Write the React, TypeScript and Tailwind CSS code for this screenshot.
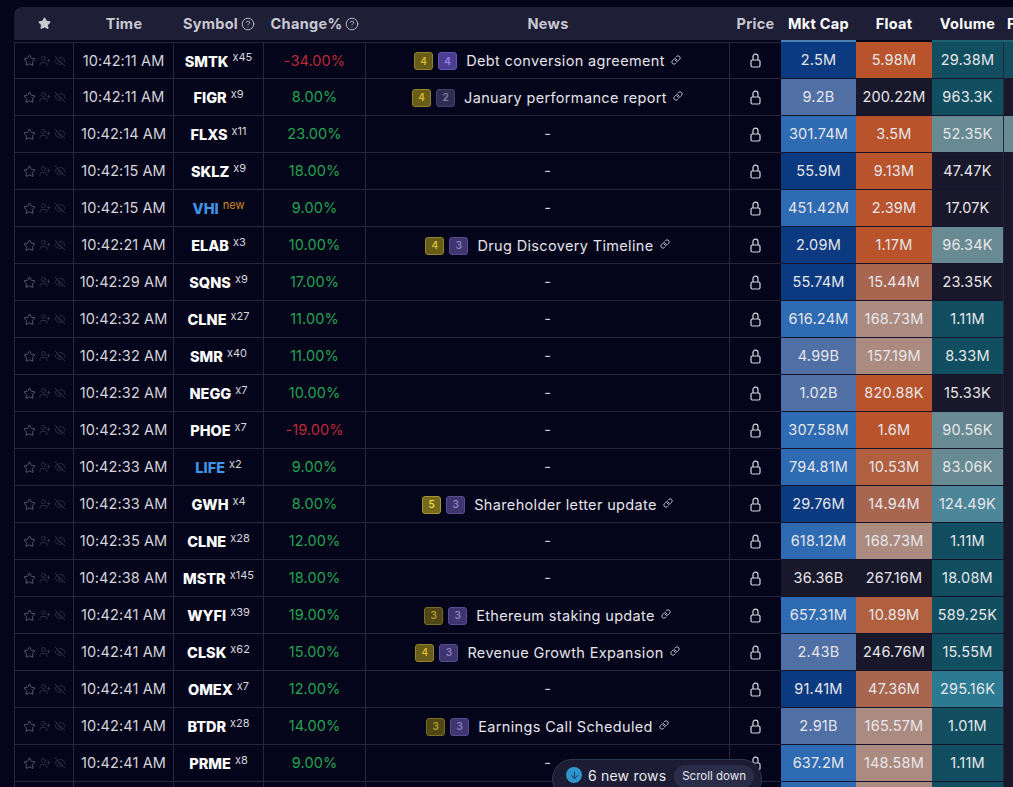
import React from 'react';
import { Star, UserPlus, EyeOff, Link, CircleHelp, ArrowDown } from 'lucide-react';

const navy = 'bg-[#0b3a80]';
const slate = 'bg-[#4f6fa5]';
const blue = 'bg-[#2f6bb3]';
const dark = 'bg-[#18182a]';
const orange = 'bg-[#b9532c]';
const rust = 'bg-[#b0603f]';
const clay = 'bg-[#a8654f]';
const tan = 'bg-[#ab8a80]';
const teal = 'bg-[#114f60]';
const grey = 'bg-[#688a92]';
const steel = 'bg-[#4d8599]';
const cyan = 'bg-[#2c7a92]';

type Row = {
  time: string; sym: string; x: string; chg: string; up: boolean;
  news?: string; b?: [string, string];
  cap: string; capC: string; flt: string; fltC: string; vol: string; volC: string;
  lastC?: string; symC?: string;
};

const rows: Row[] = [
  { time: '10:42:11 AM', sym: 'SMTK', x: 'x45', chg: '-34.00%', up: false, news: 'Debt conversion agreement', b: ['4', '4'], cap: '2.5M', capC: navy, flt: '5.98M', fltC: orange, vol: '29.38M', volC: teal, lastC: teal },
  { time: '10:42:11 AM', sym: 'FIGR', x: 'x9', chg: '8.00%', up: true, news: 'January performance report', b: ['4', '2'], cap: '9.2B', capC: slate, flt: '200.22M', fltC: dark, vol: '963.3K', volC: teal },
  { time: '10:42:14 AM', sym: 'FLXS', x: 'x11', chg: '23.00%', up: true, cap: '301.74M', capC: blue, flt: '3.5M', fltC: orange, vol: '52.35K', volC: grey, lastC: grey },
  { time: '10:42:15 AM', sym: 'SKLZ', x: 'x9', chg: '18.00%', up: true, cap: '55.9M', capC: navy, flt: '9.13M', fltC: orange, vol: '47.47K', volC: dark },
  { time: '10:42:15 AM', sym: 'VHI', x: 'new', chg: '9.00%', up: true, cap: '451.42M', capC: blue, flt: '2.39M', fltC: orange, vol: '17.07K', volC: dark, symC: 'text-[#3f95e6]' },
  { time: '10:42:21 AM', sym: 'ELAB', x: 'x3', chg: '10.00%', up: true, news: 'Drug Discovery Timeline', b: ['4', '3'], cap: '2.09M', capC: navy, flt: '1.17M', fltC: orange, vol: '96.34K', volC: grey },
  { time: '10:42:29 AM', sym: 'SQNS', x: 'x9', chg: '17.00%', up: true, cap: '55.74M', capC: navy, flt: '15.44M', fltC: clay, vol: '23.35K', volC: dark },
  { time: '10:42:32 AM', sym: 'CLNE', x: 'x27', chg: '11.00%', up: true, cap: '616.24M', capC: blue, flt: '168.73M', fltC: tan, vol: '1.11M', volC: teal },
  { time: '10:42:32 AM', sym: 'SMR', x: 'x40', chg: '11.00%', up: true, cap: '4.99B', capC: slate, flt: '157.19M', fltC: tan, vol: '8.33M', volC: teal },
  { time: '10:42:32 AM', sym: 'NEGG', x: 'x7', chg: '10.00%', up: true, cap: '1.02B', capC: slate, flt: '820.88K', fltC: orange, vol: '15.33K', volC: dark },
  { time: '10:42:32 AM', sym: 'PHOE', x: 'x7', chg: '-19.00%', up: false, cap: '307.58M', capC: blue, flt: '1.6M', fltC: orange, vol: '90.56K', volC: grey },
  { time: '10:42:33 AM', sym: 'LIFE', x: 'x2', chg: '9.00%', up: true, cap: '794.81M', capC: blue, flt: '10.53M', fltC: rust, vol: '83.06K', volC: grey, symC: 'text-[#3f95e6]' },
  { time: '10:42:33 AM', sym: 'GWH', x: 'x4', chg: '8.00%', up: true, news: 'Shareholder letter update', b: ['5', '3'], cap: '29.76M', capC: navy, flt: '14.94M', fltC: clay, vol: '124.49K', volC: steel },
  { time: '10:42:35 AM', sym: 'CLNE', x: 'x28', chg: '12.00%', up: true, cap: '618.12M', capC: blue, flt: '168.73M', fltC: tan, vol: '1.11M', volC: teal },
  { time: '10:42:38 AM', sym: 'MSTR', x: 'x145', chg: '18.00%', up: true, cap: '36.36B', capC: dark, flt: '267.16M', fltC: dark, vol: '18.08M', volC: teal },
  { time: '10:42:41 AM', sym: 'WYFI', x: 'x39', chg: '19.00%', up: true, news: 'Ethereum staking update', b: ['3', '3'], cap: '657.31M', capC: blue, flt: '10.89M', fltC: rust, vol: '589.25K', volC: teal },
  { time: '10:42:41 AM', sym: 'CLSK', x: 'x62', chg: '15.00%', up: true, news: 'Revenue Growth Expansion', b: ['4', '3'], cap: '2.43B', capC: slate, flt: '246.76M', fltC: dark, vol: '15.55M', volC: teal },
  { time: '10:42:41 AM', sym: 'OMEX', x: 'x7', chg: '12.00%', up: true, cap: '91.41M', capC: navy, flt: '47.36M', fltC: clay, vol: '295.16K', volC: cyan },
  { time: '10:42:41 AM', sym: 'BTDR', x: 'x28', chg: '14.00%', up: true, news: 'Earnings Call Scheduled', b: ['3', '3'], cap: '2.91B', capC: slate, flt: '165.57M', fltC: tan, vol: '1.01M', volC: teal },
  { time: '10:42:41 AM', sym: 'PRME', x: 'x8', chg: '9.00%', up: true, cap: '637.2M', capC: blue, flt: '148.58M', fltC: tan, vol: '1.11M', volC: teal },
  { time: '10:42:41 AM', sym: 'ABCD', x: 'x2', chg: '9.00%', up: true, cap: '', capC: blue, flt: '', fltC: tan, vol: '', volC: teal },
];

const yellowBadge: Record<string, string> = {
  '3': 'bg-[#4f4716] border-[#7a6c20] text-[#b7a02c]',
  '4': 'bg-[#695c18] border-[#94832a] text-[#d8bd30]',
  '5': 'bg-[#75691c] border-[#a59430] text-[#f0d848]',
};
const purpleBadge: Record<string, string> = {
  '2': 'bg-[#312c52] border-[#453f6e] text-[#857fb0]',
  '3': 'bg-[#3f3670] border-[#574c92] text-[#8d80c8]',
  '4': 'bg-[#4c3d90] border-[#6552b8] text-[#9a80ee]',
};

const LockIcon = () => (
  <svg width="11" height="15" viewBox="0 0 11 15" fill="none" stroke="#d8d8e0" strokeWidth="1.2" className="mx-auto">
    <rect x="1" y="7" width="9" height="7" rx="1.5" />
    <path d="M3 7V3.6a2.5 2.5 0 0 1 5 0V7" />
  </svg>
);

const Th = ({ children, className = '' }: { children: React.ReactNode; className?: string }) => (
  <th className={`h-[33px] bg-[#1e1e36] p-0 text-center text-[14.5px] font-bold tracking-[0.3px] text-[#c9c9d2] ${className}`}>
    {children}
  </th>
);

const cellLine = 'border-b border-r border-[#25253d] p-0 text-center';
const heat = 'border-b border-[#14142a] p-0 text-center text-[14.5px] tracking-[0.2px] text-[#e6e6ea]';

export default function App() {
  return (
    <div className="relative h-[787px] w-[1013px] overflow-hidden bg-[#04041a] pl-[14px] pt-[7px] font-['Inter','Liberation_Sans',sans-serif]">
      <table className="w-[1030px] table-fixed border-separate border-spacing-0">
        <colgroup>
          <col className="w-[60px]" />
          <col className="w-[100px]" />
          <col className="w-[90px]" />
          <col className="w-[102px]" />
          <col className="w-[364px]" />
          <col className="w-[51px]" />
          <col className="w-[75px]" />
          <col className="w-[76px]" />
          <col className="w-[71px]" />
          <col className="w-[41px]" />
        </colgroup>
        <thead>
          <tr>
            <Th className="rounded-tl-lg"><Star size={13} className="mx-auto fill-[#c9c9d2]" /></Th>
            <Th>Time</Th>
            <Th>
              <span className="inline-flex items-center gap-[3px]">Symbol <CircleHelp size={14} strokeWidth={1.5} /></span>
            </Th>
            <Th>
              <span className="inline-flex items-center gap-[3px]">Change% <CircleHelp size={14} strokeWidth={1.5} /></span>
            </Th>
            <Th>News</Th>
            <Th>Price</Th>
            <Th className="text-white">Mkt Cap</Th>
            <Th className="text-white">Float</Th>
            <Th className="text-white">Volume</Th>
            <Th className="text-left text-white"><span className="pl-[4px]">Fl</span></Th>
          </tr>
          <tr>
            <th className="h-[2px] p-0" colSpan={6} />
            <th className="h-[2px] bg-[#4f7fb5] p-0" />
            <th className="h-[2px] p-0" />
            <th className="h-[2px] bg-[#1d6272] p-0" colSpan={2} />
          </tr>
        </thead>
        <tbody className="border-t border-[#25253d]">
          {rows.map((r, i) => (
            <tr key={i} className="h-[37px]">
              <td className={`${cellLine} border-l ${i === 0 ? 'border-t' : ''}`}>
                <div className="flex items-center justify-center gap-[3px] text-[#5e5e70]">
                  <Star size={13} strokeWidth={1.3} className="text-[#77778a]" />
                  <UserPlus size={12} strokeWidth={1.2} className="text-[#45455a]" />
                  <EyeOff size={12} strokeWidth={1.2} className="text-[#45455a]" />
                </div>
              </td>
              <td className={`${cellLine} ${i === 0 ? 'border-t' : ''} text-[14.5px] tracking-[0.1px] text-[#d4d4da]`}>{r.time}</td>
              <td className={`${cellLine} ${i === 0 ? 'border-t' : ''}`}>
                <span className={`text-[14.5px] font-extrabold ${r.symC ?? 'text-white'}`}>{r.sym}</span>
                <sup className={`ml-[4px] text-[11px] ${r.x === 'new' ? 'text-[#d08a20]' : 'text-[#d8d8de]'}`}>{r.x}</sup>
              </td>
              <td className={`${cellLine} ${i === 0 ? 'border-t' : ''} text-[14.5px] tracking-[0.1px] ${r.up ? 'text-[#22a550]' : 'text-[#bb2a38]'}`}>{r.chg}</td>
              <td className={`${cellLine} ${i === 0 ? 'border-t' : ''} text-[14.5px] text-[#e4e4ea]`}>
                {r.news && r.b ? (
                  <span className="inline-flex items-center">
                    <span className={`flex h-[18px] w-[19px] items-center justify-center rounded-[3px] border text-[10px] font-semibold ${yellowBadge[r.b[0]]}`}>{r.b[0]}</span>
                    <span className={`ml-[5px] flex h-[18px] w-[19px] items-center justify-center rounded-[3px] border text-[10px] font-semibold ${purpleBadge[r.b[1]]}`}>{r.b[1]}</span>
                    <span className="ml-[9px] tracking-[0.35px]">{r.news}</span>
                    <Link size={10} strokeWidth={2} className="ml-[6px] mb-[3px] text-[#e4e4ea]" />
                  </span>
                ) : (
                  <span className="text-[#d4d4da]">-</span>
                )}
              </td>
              <td className={`${cellLine} border-r-0 ${i === 0 ? 'border-t' : ''}`}><LockIcon /></td>
              <td className={`${heat} ${r.capC}`}>{r.cap}</td>
              <td className={`${heat} ${r.fltC}`}>{r.flt}</td>
              <td className={`${heat} ${r.volC}`}>{r.vol}</td>
              <td className={`${heat} border-l border-l-[#25253d] ${r.lastC ?? dark}`} />
            </tr>
          ))}
        </tbody>
      </table>

      {/* new rows pill */}
      <div className="absolute left-[552px] top-[759px] flex h-[40px] w-[210px] items-start gap-[6px] rounded-[20px] border border-[#2b3a52] bg-[#1c1c34] pl-[13px] pt-[7px]">
        <span className="flex h-[16px] w-[16px] items-center justify-center rounded-full bg-[#2f93cc]">
          <ArrowDown size={11} className="text-[#0f3a58]" />
        </span>
        <span className="text-[14px] leading-[17px] tracking-[0.2px] text-[#e8e8ee]">6 new rows</span>
        <span className="ml-[2px] -mt-[2px] rounded-[12px] bg-[#2a2d48] px-[8px] py-[4px] text-[11.5px] leading-[15px] text-[#e8e8ee]">Scroll down</span>
      </div>
    </div>
  );
}
